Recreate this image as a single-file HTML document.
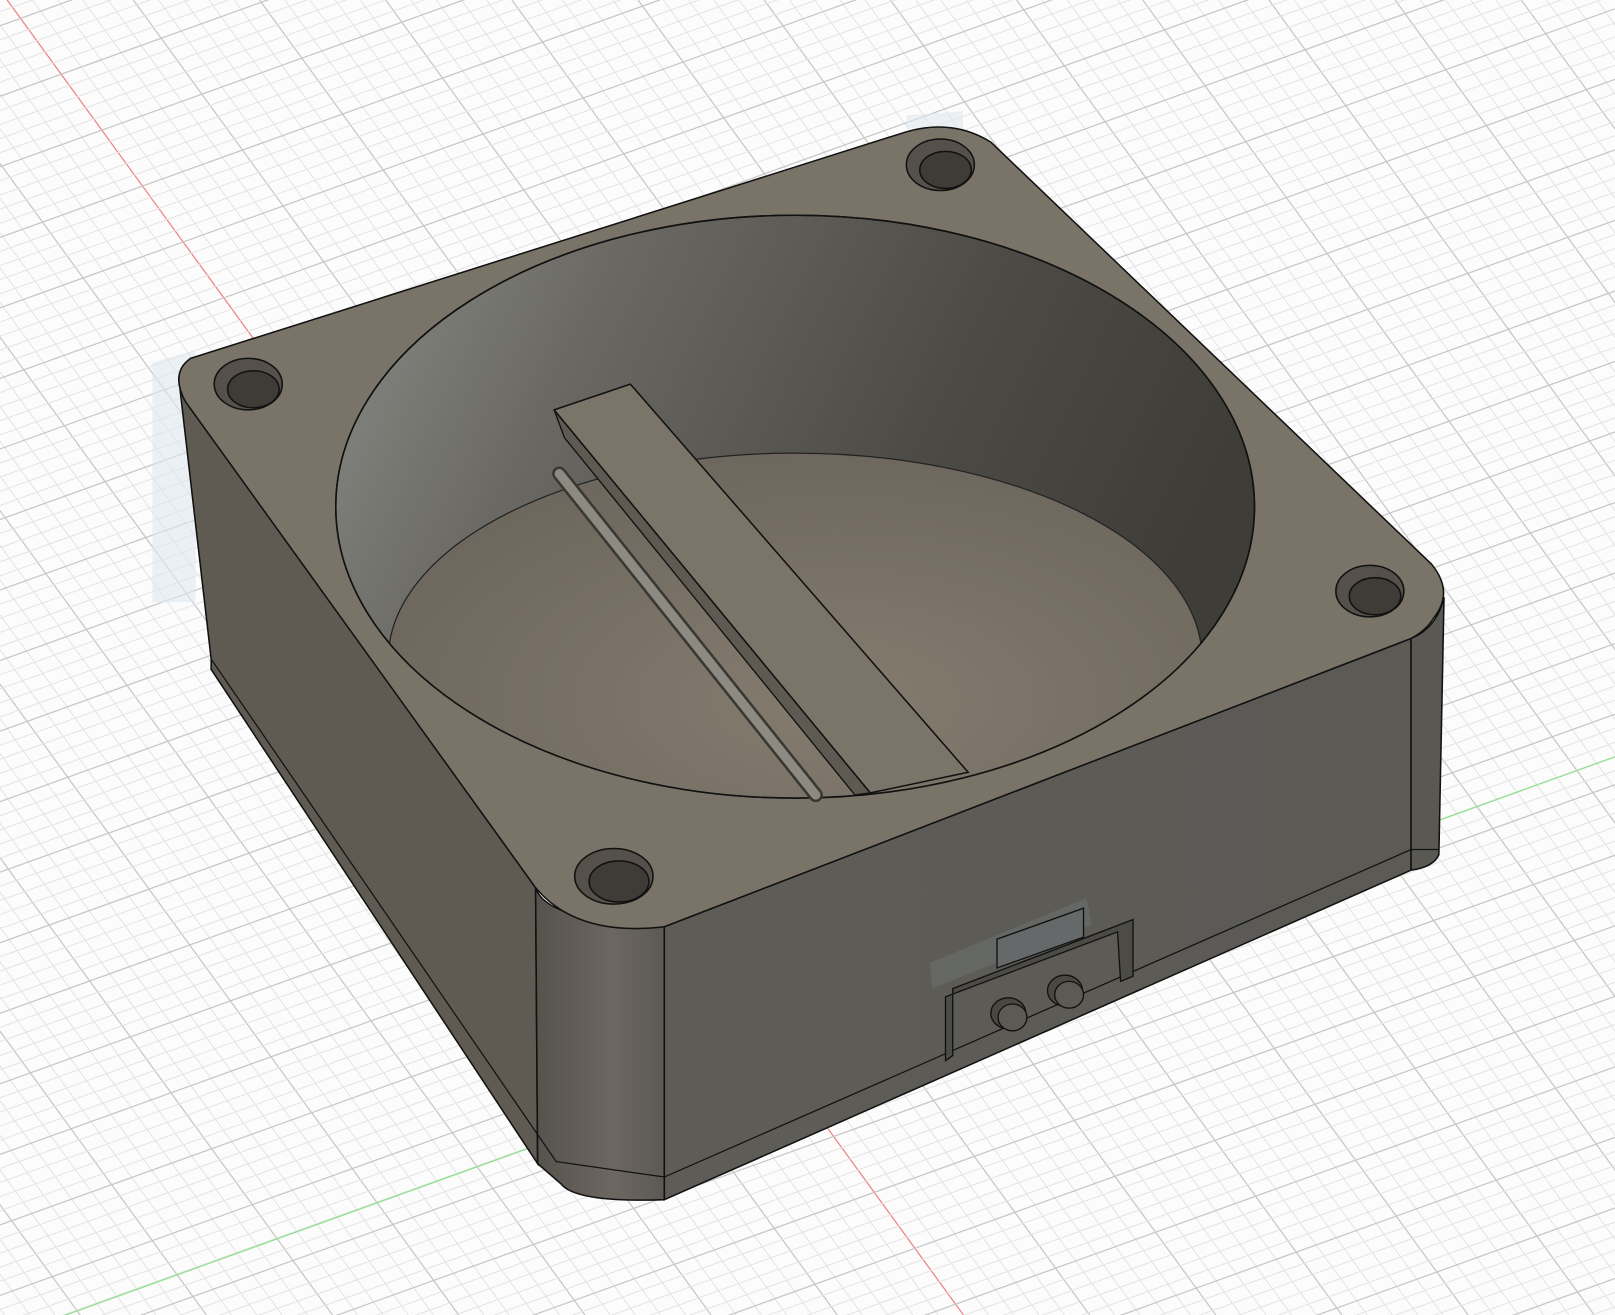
<!DOCTYPE html>
<html><head><meta charset="utf-8"><style>
html,body{margin:0;padding:0;background:#fcfcfc;overflow:hidden;width:1615px;height:1315px}
svg{display:block}
</style></head><body>
<svg id="s" width="1615" height="1315" viewBox="0 0 1568 1277" preserveAspectRatio="none" xmlns="http://www.w3.org/2000/svg">
<defs>
<linearGradient id="wall" x1="0" y1="0" x2="1" y2="0.3">
<stop offset="0" stop-color="#8a8d89"/><stop offset="0.3" stop-color="#6a6862"/><stop offset="0.7" stop-color="#4c4a44"/><stop offset="1" stop-color="#3f3d38"/>
</linearGradient>
<radialGradient id="floor" cx="0.55" cy="0.6" r="0.6">
<stop offset="0" stop-color="#857c6f"/><stop offset="1" stop-color="#6d675d"/>
</radialGradient>
<linearGradient id="front" x1="0" y1="0" x2="1" y2="0">
<stop offset="0" stop-color="#5e5c57"/><stop offset="1" stop-color="#5b5a55"/>
</linearGradient>
<linearGradient id="col" x1="0" y1="0" x2="1" y2="0">
<stop offset="0" stop-color="#56524c"/><stop offset="0.6" stop-color="#6c6760"/><stop offset="1" stop-color="#5c5953"/>
</linearGradient>
<clipPath id="open"><ellipse cx="772" cy="492" rx="446" ry="283"/></clipPath>
</defs>
<g id="grid"></g>
<polygon points="148,352 190,340 190,585 148,585" fill="#dfe7ee" opacity="0.6"/>
<polygon points="880,112 935,108 935,125 880,125" fill="#dfe7ee" opacity="0.6"/>
<!-- left side face -->
<polygon points="175,380 520,862 522,1130 205,650 205,640" fill="#5f5a52" stroke="#111" stroke-width="1.5"/>
<!-- corner column -->
<path d="M520,862 Q530,895 645,900 L645,1165 Q560,1168 545,1150 L522,1130 Z" fill="url(#col)" stroke="#111" stroke-width="1.5"/>
<!-- front face -->
<polygon points="645,900 1370,620 1370,845 645,1165" fill="url(#front)" stroke="#111" stroke-width="1.5"/>
<!-- right column -->
<path d="M1370,620 Q1395,610 1402,580 L1397,830 Q1392,842 1370,845 Z" fill="#5a5853" stroke="#111" stroke-width="1.5"/>
<!-- bottom lip lines -->
<polyline points="205,640 540,1128 645,1143 1370,825 1397,825" fill="none" stroke="#111" stroke-width="1.2"/>
<line x1="645" y1="900" x2="645" y2="1165" stroke="#111" stroke-width="1.2"/>
<!-- top face -->
<path d="M185,348 L880,128 Q925,115 962,138 L1390,548 Q1412,575 1392,600 Q1385,612 1370,620 L645,900 Q560,910 520,862 L180,390 Q165,362 185,348 Z" fill="#7a7468" stroke="#111" stroke-width="1.5"/>
<!-- bowl -->
<ellipse cx="772" cy="492" rx="446" ry="283" fill="url(#wall)" stroke="#111" stroke-width="1.5"/>
<g clip-path="url(#open)">
<ellipse cx="772" cy="640" rx="395" ry="200" fill="url(#floor)" stroke="#222" stroke-width="1.2"/>
</g>
<ellipse cx="772" cy="492" rx="446" ry="283" fill="none" stroke="#111" stroke-width="1.5"/>
<!-- rod -->
<line x1="543" y1="460" x2="792" y2="772" stroke="#3a3833" stroke-width="14" stroke-linecap="round"/>
<line x1="543" y1="460" x2="792" y2="772" stroke="#8d8a82" stroke-width="9" stroke-linecap="round"/>
<!-- bar -->
<polygon points="538,398 548,425 830,772 845,770" fill="#5e5a52" stroke="#111" stroke-width="1.3"/>
<polygon points="538,398 612,373 940,750 845,770" fill="#7b7569" stroke="#111" stroke-width="1.5"/>
<!-- holes -->
<g stroke="#111" stroke-width="1.5">
<ellipse cx="913" cy="160" rx="33" ry="25" fill="#55514a"/><ellipse cx="918" cy="165" rx="25" ry="18" fill="#3f3c37"/>
<ellipse cx="241" cy="373" rx="33" ry="25" fill="#55514a"/><ellipse cx="246" cy="378" rx="25" ry="18" fill="#3f3c37"/>
<ellipse cx="1330" cy="574" rx="33" ry="25" fill="#55514a"/><ellipse cx="1335" cy="579" rx="25" ry="18" fill="#3f3c37"/>
<ellipse cx="596" cy="851" rx="38" ry="27" fill="#55514a"/><ellipse cx="601" cy="856" rx="29" ry="20" fill="#3f3c37"/>
</g>
<!-- connector -->
<polygon points="903,935 1055,872 1060,898 905,960" fill="#7f8a8e" opacity="0.25"/>
<path d="M918,1030 L918,968 L1085,905 L1088,953 L1100,948 L1100,893 L925,960 L925,1025 Z" fill="#4d4b46" stroke="#111" stroke-width="1.3"/>
<polygon points="968,912 1052,882 1052,910 968,940" fill="#66696a" stroke="#111" stroke-width="1.3"/>
<g stroke="#111" stroke-width="1.3">
<ellipse cx="979" cy="984" rx="17" ry="15" fill="#4a4741"/><ellipse cx="983" cy="988" rx="14" ry="13" fill="#5d5a54"/>
<ellipse cx="1034" cy="962" rx="17" ry="15" fill="#4a4741"/><ellipse cx="1038" cy="966" rx="14" ry="13" fill="#5d5a54"/>
</g>
</svg>
<script>
(function(){
var g=document.getElementById('grid'),out='';
function L(x1,y1,x2,y2,c,w){out+='<line x1="'+x1+'" y1="'+y1+'" x2="'+x2+'" y2="'+y2+'" stroke="'+c+'" stroke-width="'+w+'"/>';}
for(var k=-80;k<=80;k++){var c=7+k*24.5;var maj=(k%5==0);
 L(c,0,c+0.727*1277,1277,k==0?'#f08080':(maj?'#c6c6c6':'#e4e4e4'),maj?1.2:1);}
for(var k=-40;k<=140;k++){var d=25+k*13.7;var maj=(k%5==0);
 L(0,d,1568,d-0.36*1568,maj?'#c6c6c6':'#e4e4e4',maj?1.2:1);}
L(0,1300,1568,735,'#8fe08f',1.2);
g.innerHTML=out;
})();
</script>
</body></html>
